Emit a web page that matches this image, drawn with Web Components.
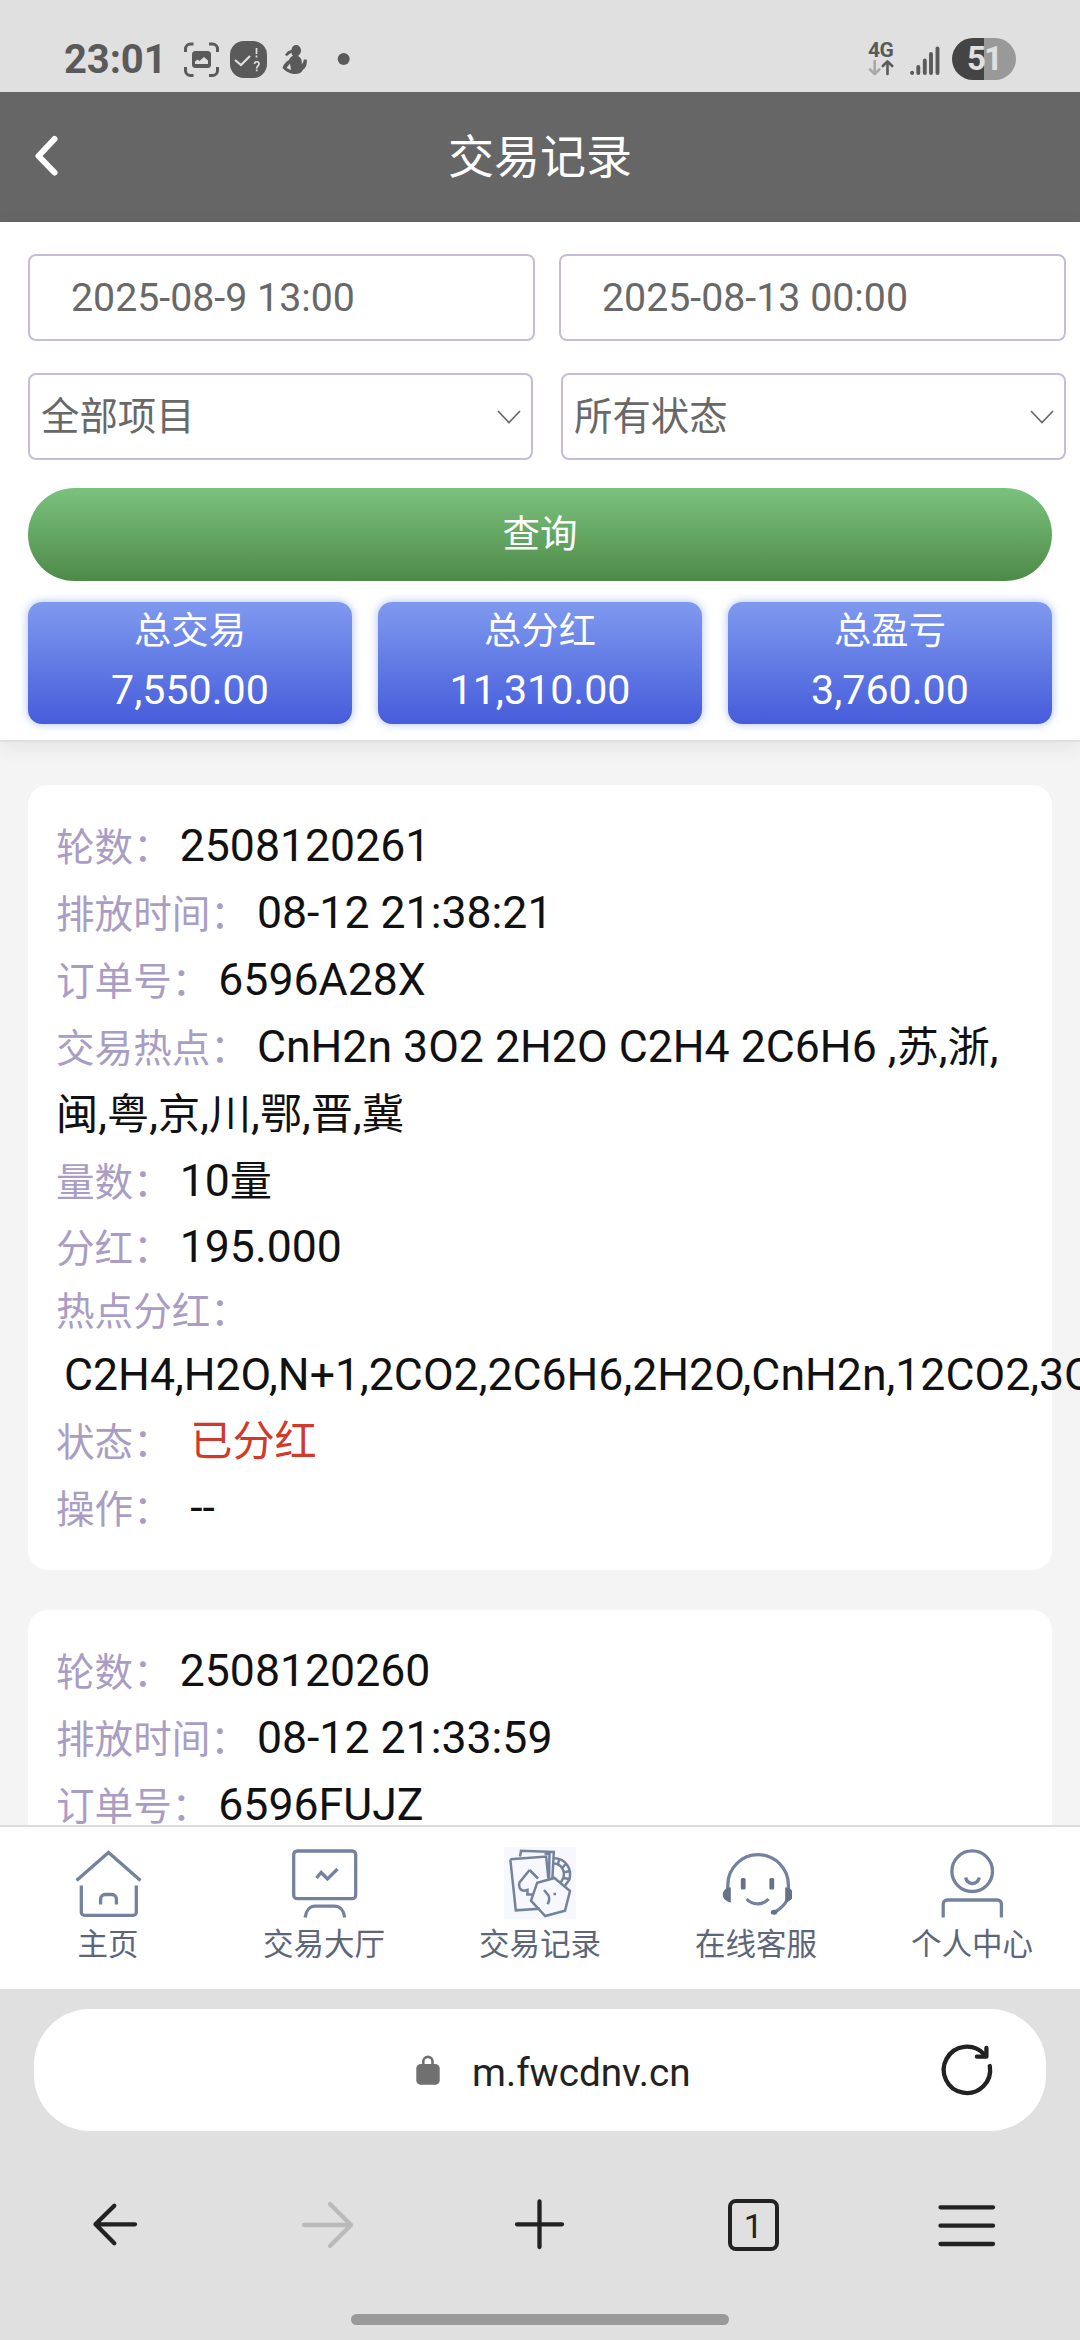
<!DOCTYPE html>
<html lang="zh-CN">
<head>
<meta charset="utf-8">
<title>交易记录</title>
<style>
html,body{margin:0;padding:0}
body{width:1080px;height:2340px;overflow:hidden;background:#f4f4f4;font-family:Roboto,"Noto Sans CJK SC",sans-serif;color:#111}
</style>
</head>
<body>
<phone-screen>
  <status-bar></status-bar>
  <page-header>交易记录</page-header>
  <filter-panel>
    <date-field slot="dates">2025-08-9 13:00</date-field>
    <date-field slot="dates">2025-08-13 00:00</date-field>
    <select-field slot="selects">全部项目</select-field>
    <select-field slot="selects">所有状态</select-field>
    <query-button slot="action">查询</query-button>
    <stat-card slot="stats" label="总交易">7,550.00</stat-card>
    <stat-card slot="stats" label="总分红">11,310.00</stat-card>
    <stat-card slot="stats" label="总盈亏">3,760.00</stat-card>
  </filter-panel>
  <record-list>
    <record-card>
      <record-row label="轮数：">2508120261</record-row>
      <record-row label="排放时间：">08-12 21:38:21</record-row>
      <record-row label="订单号：">6596A28X</record-row>
      <record-row label="交易热点：">CnH2n 3O2 2H2O C2H4 2C6H6 ,<cjk-text>苏</cjk-text>,<cjk-text>浙</cjk-text>,<br><cjk-text>闽</cjk-text>,<cjk-text>粤</cjk-text>,<cjk-text>京</cjk-text>,<cjk-text>川</cjk-text>,<cjk-text>鄂</cjk-text>,<cjk-text>晋</cjk-text>,<cjk-text>冀</cjk-text></record-row>
      <record-row label="量数：">10<cjk-text>量</cjk-text></record-row>
      <record-row label="分红：">195.000</record-row>
      <record-row label="热点分红：" stacked>C2H4,H2O,N+1,2CO2,2C6H6,2H2O,CnH2n,12CO2,3O2</record-row>
      <record-row label="状态：" wide alert><cjk-text>已分红</cjk-text></record-row>
      <record-row label="操作：" wide>--</record-row>
    </record-card>
    <record-card>
      <record-row label="轮数：">2508120260</record-row>
      <record-row label="排放时间：">08-12 21:33:59</record-row>
      <record-row label="订单号：">6596FUJZ</record-row>
    </record-card>
  </record-list>
  <tab-bar>
    <tab-item icon="home">主页</tab-item>
    <tab-item icon="board">交易大厅</tab-item>
    <tab-item icon="cards">交易记录</tab-item>
    <tab-item icon="support">在线客服</tab-item>
    <tab-item icon="person">个人中心</tab-item>
  </tab-bar>
  <browser-bar>m.fwcdnv.cn</browser-bar>
</phone-screen>

<script>
const define = (name, markup) => customElements.define(name, class extends HTMLElement {
  constructor() {
    super();
    this.attachShadow({ mode: 'open' }).innerHTML =
      typeof markup === 'function' ? markup(this) : markup;
  }
});

define('phone-screen', `<style>:host{display:flex;flex-direction:column;width:1080px;height:2340px;overflow:hidden}</style><slot></slot>`);

define('status-bar', `<style>
:host{display:flex;flex:none;height:92px;box-sizing:border-box;padding:26px 64px 0 64px;background:#e0e0e0;color:#5a5a5a;justify-content:space-between}
.side{display:flex;align-items:center;height:66px}
.time{font:700 40px/67px Roboto,sans-serif;letter-spacing:-.1px;width:120px}
.net{display:flex;flex-direction:column;width:27px;height:36px;margin-right:15px}
.net span{font:700 21px/18px Roboto,sans-serif;letter-spacing:-.5px}
.battery{display:flex;align-items:center;justify-content:center;width:64px;height:42px;border-radius:21px;margin-left:12px;background:linear-gradient(90deg,#444 50%,#999 50%);color:#e0e0e0;font:700 33px/42px Roboto,sans-serif;letter-spacing:-2px}
svg{display:block}
</style>
<div class="side"><span class="time">23:01</span>
<svg width="170" height="40" viewBox="184 39 170 40" fill="none" stroke="#5a5a5a">
 <path d="M185.500 52v-3a5 5 0 0 1 5-5h3M209 44h3.500a5 5 0 0 1 5 5v3M217.500 67v3.500a5 5 0 0 1-5 5H209M193.500 75.500h-3a5 5 0 0 1-5-5V67" stroke-width="3"/>
 <rect x="192" y="51" width="19" height="17" rx="3.500" fill="#5a5a5a" stroke="none"/>
 <path d="M195 64v-2.500l2.500-2 2 1.500 4.500-4 4 3.500V64z" fill="#e0e0e0" stroke="none"/>
 <rect x="230" y="41" width="37" height="37" rx="14" fill="#5a5a5a" stroke="none"/>
 <path d="M235 60l6 5 9-9" stroke="#e0e0e0" stroke-width="2.200"/>
 <path d="M256.500 48v6M256.500 55.500v2M254.500 64c0-3 4.500-3 4.500 0 0 2-2.300 2-2.300 4.500M256.700 69.500v1.800" stroke="#e0e0e0" stroke-width="1.700"/>
 <path d="M291.500 50c0-3 2-5 4.500-5s5 2 5 5.500c0 2.500-1.500 4.500-3 5.500 3.500 2 4 4.500 3.800 8 2-1 1.700-4 2-4.500h3c.5 5-1 8.500-4 10.500-1.500 3-4.500 4-7.800 4-5 0-9-2.500-12.500-6 1-3.500 3-6 6.500-8 1-2.500 2-3 4-4.200-1-.8-1.500-2-1.600-3.200l-4.400 3.400-2-1c1.500-3.200 4-4.500 6.500-5z" fill="#5a5a5a" stroke="none"/>
 <path d="M286.500 68l3.500-4.500 1 6.500z" fill="#e0e0e0" stroke="none"/>
 <circle cx="343.700" cy="59" r="6" fill="#5a5a5a" stroke="none"/>
</svg></div>
<div class="side"><div class="net"><span>4G</span>
<svg width="27" height="18" viewBox="0 0 27 18" fill="none" stroke-width="2.600" stroke-linecap="round" stroke-linejoin="round"><path d="M6.700 2v13M2 10.500l4.700 4.700 4.700-4.700" stroke="#a8a8a8"/><path d="M19.500 15V2.500M14.800 7l4.700-4.700L24.200 7" stroke="#5a5a5a"/></svg></div>
<svg width="30" height="36" viewBox="909.500 41 30 36" stroke="#5a5a5a" stroke-width="3.900" stroke-linecap="round"><path d="M911.600 72.600v.400M917.800 67v6M924.300 60.500V73M930.500 54v19M937 48.500V73"/></svg>
<div class="battery">51</div></div>`);

define('page-header', `<style>
:host{display:flex;flex:none;align-items:center;height:130px;background:#666;color:#fff;font-size:46px;line-height:130px}
svg{display:block;width:90px;height:130px}
span{flex:1;text-align:center;padding-right:90px}
</style><svg viewBox="0 0 90 130"><path d="M54.500 47L38.500 64l16 16.500" fill="none" stroke="#fff" stroke-width="6" stroke-linecap="round" stroke-linejoin="round"/></svg><span><slot></slot></span>`);

define('filter-panel', `<style>
:host{display:block;flex:none;height:520px;box-sizing:border-box;padding:32px 14px 0 28px;background:#fff;border-bottom:2px solid #e0e0e0;box-shadow:0 5px 20px rgba(0,0,0,.07);position:relative;z-index:1}
.row{display:flex}
.dates{gap:24px}.selects{gap:28px;margin-top:32px}
.action{display:block;margin:28px 14px 21px 0}
.stats{gap:26px;margin-right:14px}
</style><div class="row dates"><slot name="dates"></slot></div><div class="row selects"><slot name="selects"></slot></div>
<div class="action"><slot name="action"></slot></div><div class="row stats"><slot name="stats"></slot></div>`);

define('date-field', `<style>
:host{display:block;flex:1;height:87px;box-sizing:border-box;border:2px solid #c7bcd8;border-radius:8px;padding-left:41px;color:#686868;font-size:39.300px;line-height:84px}
</style><slot></slot>`);

define('select-field', `<style>
:host{display:flex;flex:1;align-items:center;justify-content:space-between;height:87px;box-sizing:border-box;border:2px solid #c7bcd8;border-radius:8px;padding:0 10px 0 11px;color:#686868;font-size:38.400px;line-height:83px}
</style><span><slot></slot></span><svg width="24" height="16" viewBox="0 0 24 16"><path d="M1 2l11 11.500L23 2" fill="none" stroke="#686868" stroke-width="1.700"/></svg>`);

define('query-button', `<style>
:host{display:block;height:93px;border-radius:47px;background:linear-gradient(#7bc27f,#64a762 50%,#4d8a48);color:#fff;text-align:center;font-size:37.500px;line-height:93px}
</style><slot></slot>`);

define('stat-card', el => `<style>
:host{display:flex;flex:1;flex-direction:column;align-items:center;height:122px;border-radius:14px;background:linear-gradient(#7f9aef,#465cdb);box-shadow:0 0 9px rgba(80,115,240,.5);color:#fff}
.label{font-size:37.300px;line-height:59px;height:60px}
.value{font-size:41.200px;line-height:56px}
</style><span class="label">${el.getAttribute('label')}</span><span class="value"><slot></slot></span>`);

define('record-list', `<style>
:host{display:flex;flex:1;min-height:0;flex-direction:column;gap:40px;padding:43px 28px 0;overflow:hidden;background:#f4f4f4}
</style><slot></slot>`);

define('record-card', `<style>
:host{display:block;flex:none;background:#fff;border-radius:20px;padding:28px 28px}
</style><slot></slot>`);

define('record-row', el => `<style>
:host{display:block;white-space:nowrap;font-size:44.600px;line-height:66.900px;color:#111}
:host([stacked]) .label{display:block;line-height:61px}
:host([stacked]) .value{display:block;line-height:66px}
:host([wide]) .value{margin-left:18.500px}
:host([alert]) .value{color:#d03a2b}
.label{font-size:38.600px;line-height:1;color:#aa9dc4}
.value{margin-left:8px}
</style><span class="label">${el.getAttribute('label')}</span><span class="value"><slot></slot></span>`);

define('cjk-text', `<style>:host{display:inline;font-size:42.200px;line-height:1}</style><slot></slot>`);

define('tab-bar', `<style>
:host{display:flex;flex:none;height:164px;box-sizing:border-box;border-top:2px solid #dcdcdc;background:#fff;padding-top:20px}
</style><slot></slot>`);

const icons = {
  home: `<path d="M4.500 33.500L36.500 5.500l32 28"/><path d="M9.300 38.500v26.800a3 3 0 0 0 3 3h49a3 3 0 0 0 3-3V38.500M28.600 57.500V52a4.500 4.500 0 0 1 4.500-4.500h6.800a4.500 4.500 0 0 1 4.500 4.500v5.500"/>`,
  board: `<rect x="5.700" y="4" width="62" height="47.700" rx="3.500"/><path d="M28.500 31l4.700-5.500 6.300 6.500L49.500 22M17.100 70.500C18 63.500 22 59.200 27 59.200h19.500c5.500 0 9.500 4.500 10.200 11.300"/>`,
  cards: `<rect width="72.500" height="72.500" fill="#f6f8fd" stroke="none"/>
<g stroke-width="2.500"><path d="M16 9.500l1-5.800L49.800 5 48.400 31M6.300 12.300L42.200 9.500l2.100 22M6.300 12.300l5.500 51L36 61.700M40.500 6.500l5 .500-.5 24"/>
<path d="M25.600 23L15.500 35.500c-1.500 4 .5 8 5 8.300l3-.8v4.500h6M25.600 23l8.500 8.500M22 47.500h6"/>
<path d="M50.500 31l15.500 13-5 19.700-19.800 5.300L27 53.700l6.200-18z"/><path d="M40 43l4.500 5.500c1.500 3 .5 6-.9 8.800M49.500 47h2.500"/>
<path d="M50 11.300c11 0 18.500 10 15.300 21.500L60.800 39M50 16.500c7.500.500 11 7 9.500 14l-2.700 5M55 12.500l-1 5M61.500 17l-3.500 4.500M65.500 24l-6 1.500M65.300 32l-6-1"/></g>`,
  support: `<path d="M7.800 43V38a30.300 30.300 0 0 1 60.600 0v5" /><path d="M26.600 52c6 6.500 16 6.500 22 0M67.500 52c-2 5-6 9-12.500 13"/>
<g fill="#66728a" stroke="none"><path d="M10.800 40.500v15c-3-.5-8-3-8-7.500s3-5.500 4-7.500zM65.200 40.500v15c3-.5 8.300-3 8.300-7.500s-3.300-5.500-4.300-7.500z"/><rect x="20.800" y="31" width="4.800" height="11.500" rx="1.500"/><rect x="49.400" y="31" width="4.800" height="11.500" rx="1.500"/><ellipse cx="54" cy="65.300" rx="3.200" ry="2.500"/></g>`,
  person: `<circle cx="36.200" cy="24.200" r="20.300"/><path d="M29.600 30.500c2 8 11.500 8 13.800 0M7.200 70.500V57a4 4 0 0 1 4-4h50.200a4 4 0 0 1 4 4v13.500"/>`
};

define('tab-item', el => `<style>
:host{display:flex;flex:1;flex-direction:column;align-items:center;color:#5d6579;font-size:30.500px;line-height:44px}
svg{display:block;margin-bottom:3px}
</style><svg width="72.500" height="72.500" viewBox="0 0 72.500 72.500" fill="none" stroke="#75829e" stroke-width="3.300">${icons[el.getAttribute('icon')]}</svg><span><slot></slot></span>`);

define('browser-bar', `<style>
:host{display:flex;flex:none;flex-direction:column;height:351px;box-sizing:border-box;padding-top:20px;background:#e0e0e0;color:#222}
svg{display:block}
.address{display:flex;align-items:center;height:122px;margin:0 34px;border-radius:56px;background:#fff}
.lock{margin-left:382px}
.url{flex:1;padding:6px 0 0 32px;font-size:38.700px;line-height:122px}
.reload{margin-right:49px}
.tools{display:flex;padding:0 6px 0 8px;margin-top:62px;height:64px}
.tool{display:flex;flex:1;align-items:center;justify-content:center}
.tabs{width:43px;height:43.500px;border:4px solid #222;border-radius:8px;text-align:center;font-size:34px;line-height:46px;margin-right:2px}
.grip{width:378px;height:11px;border-radius:6px;background:#9a9a9a;margin:57px auto 0}
</style>
<div class="address">
<svg class="lock" width="24" height="30" viewBox="0 0 24 30"><rect x=".3" y="9" width="23.400" height="20.700" rx="4.500" fill="#707070"/><path d="M7.300 10V6.500a4.600 4.600 0 0 1 9.200 0V10" fill="none" stroke="#707070" stroke-width="2.600"/></svg>
<span class="url"><slot></slot></span>
<svg class="reload" width="60" height="60" viewBox="936.600 2040 60 60" fill="none" stroke="#222" stroke-width="4.300" stroke-linecap="round" stroke-linejoin="round"><path d="M989.400 2066a23.200 23.200 0 1 1-5.500-11.500"/><path d="M986 2048v8.700h-9.500"/></svg>
</div>
<div class="tools">
<div class="tool"><svg width="60" height="64" viewBox="0 0 60 64" fill="none" stroke="#222" stroke-width="4.300" stroke-linecap="round" stroke-linejoin="round"><path d="M50 31.300H10.500M29.300 12.700L10.500 31.300l18.800 19"/></svg></div>
<div class="tool"><svg width="60" height="64" viewBox="0 0 60 64" fill="none" stroke="#bababa" stroke-width="4.300" stroke-linecap="round" stroke-linejoin="round"><path d="M6 32h47M32 11l21 21-21 21"/></svg></div>
<div class="tool"><svg width="60" height="64" viewBox="0 0 60 64" stroke="#222" stroke-width="4.300" stroke-linecap="round"><path d="M6 31.300h45M28.500 8.500v45.500"/></svg></div>
<div class="tool"><div class="tabs">1</div></div>
<div class="tool"><svg width="60" height="64" viewBox="0 0 60 64" stroke="#222" stroke-width="4.300" stroke-linecap="round"><path d="M3.500 14.300h52.500M3.500 32.700h52.500M3.500 51h52.500"/></svg></div>
</div>
<div class="grip"></div>`);
</script>
</body>
</html>
